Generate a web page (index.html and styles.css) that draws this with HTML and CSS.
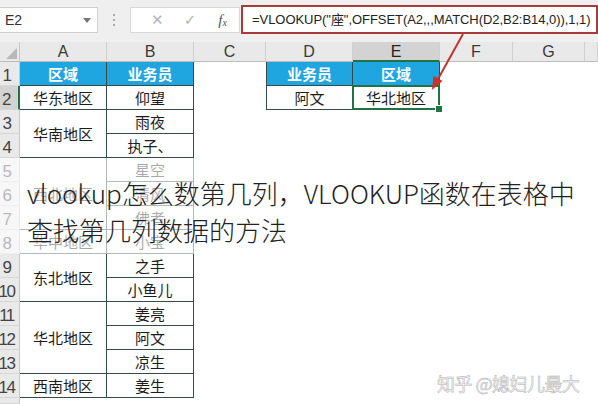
FILE: index.html
```html
<!DOCTYPE html>
<html lang="zh-CN">
<head>
<meta charset="utf-8">
<title>VLOOKUP</title>
<link rel="stylesheet" href="styles.css">
</head>
<body>
<div class="page">
  <div class="toolbar">
    <div class="namebox"><span class="ref">E2</span><span class="caret"></span></div>
    <div class="dots"><i></i><i></i><i></i></div>
    <div class="btns">
      <span class="btn cancel">✕</span>
      <span class="btn ok">✓</span>
      <span class="btn fx">f<sub>x</sub></span>
    </div>
    <div class="formula">=VLOOKUP("座",OFFSET(A2,,,MATCH(D2,B2:B14,0)),1,1)</div>
  </div>

  <div class="sheet">
    <!-- header row -->
    <div class="corner"><span class="tri"></span></div>
    <div class="colh">A</div>
    <div class="colh">B</div>
    <div class="colh">C</div>
    <div class="colh">D</div>
    <div class="colh sel">E</div>
    <div class="colh">F</div>
    <div class="colh">G</div>
    <div class="colh"></div>

    <!-- row 1 -->
    <div class="rowh">1</div>
    <div class="c t th first">区域</div>
    <div class="c t th">业务员</div>
    <div class="c"></div>
    <div class="c t th dl">业务员</div>
    <div class="c t th">区域</div>
    <div class="c"></div><div class="c"></div><div class="c"></div>

    <!-- row 2 -->
    <div class="rowh sel">2</div>
    <div class="c t first">华东地区</div>
    <div class="c t">仰望</div>
    <div class="c"></div>
    <div class="c t dl">阿文</div>
    <div class="c t active">华北地区</div>
    <div class="c"></div><div class="c"></div><div class="c"></div>

    <!-- row 3 -->
    <div class="rowh">3</div>
    <div class="c t first span2">华南地区</div>
    <div class="c t">雨夜</div>
    <div class="c"></div><div class="c"></div><div class="c"></div><div class="c"></div><div class="c"></div><div class="c"></div>

    <!-- row 4 -->
    <div class="rowh">4</div>
    <div class="c t">执子、</div>
    <div class="c"></div><div class="c"></div><div class="c"></div><div class="c"></div><div class="c"></div><div class="c"></div>

    <!-- row 5 -->
    <div class="rowh">5</div>
    <div class="c t first span3">西北地区</div>
    <div class="c t">星空</div>
    <div class="c"></div><div class="c"></div><div class="c"></div><div class="c"></div><div class="c"></div><div class="c"></div>

    <!-- row 6 -->
    <div class="rowh">6</div>
    <div class="c t">清风</div>
    <div class="c"></div><div class="c"></div><div class="c"></div><div class="c"></div><div class="c"></div><div class="c"></div>

    <!-- row 7 -->
    <div class="rowh">7</div>
    <div class="c t">佛者</div>
    <div class="c"></div><div class="c"></div><div class="c"></div><div class="c"></div><div class="c"></div><div class="c"></div>

    <!-- row 8 -->
    <div class="rowh">8</div>
    <div class="c t first">华中地区</div>
    <div class="c t">小宝</div>
    <div class="c"></div><div class="c"></div><div class="c"></div><div class="c"></div><div class="c"></div><div class="c"></div>

    <!-- row 9 -->
    <div class="rowh">9</div>
    <div class="c t first span2">东北地区</div>
    <div class="c t">之手</div>
    <div class="c"></div><div class="c"></div><div class="c"></div><div class="c"></div><div class="c"></div><div class="c"></div>

    <!-- row 10 -->
    <div class="rowh">10</div>
    <div class="c t">小鱼儿</div>
    <div class="c"></div><div class="c"></div><div class="c"></div><div class="c"></div><div class="c"></div><div class="c"></div>

    <!-- row 11 -->
    <div class="rowh">11</div>
    <div class="c t first span3">华北地区</div>
    <div class="c t">姜亮</div>
    <div class="c"></div><div class="c"></div><div class="c"></div><div class="c"></div><div class="c"></div><div class="c"></div>

    <!-- row 12 -->
    <div class="rowh">12</div>
    <div class="c t">阿文</div>
    <div class="c"></div><div class="c"></div><div class="c"></div><div class="c"></div><div class="c"></div><div class="c"></div>

    <!-- row 13 -->
    <div class="rowh">13</div>
    <div class="c t">凉生</div>
    <div class="c"></div><div class="c"></div><div class="c"></div><div class="c"></div><div class="c"></div><div class="c"></div>

    <!-- row 14 -->
    <div class="rowh">14</div>
    <div class="c t first">西南地区</div>
    <div class="c t">姜生</div>
    <div class="c"></div><div class="c"></div><div class="c"></div><div class="c"></div><div class="c"></div><div class="c"></div>

    <!-- row 15 (partial) -->
    <div class="rowh"></div>
  </div>

  <div class="band">
    <p class="title">vlookup怎么数第几列，VLOOKUP函数在表格中<br>查找第几列数据的方法</p>
  </div>

  <svg class="arrow" width="598" height="404" viewBox="0 0 598 404">
    <line x1="463" y1="34" x2="438" y2="79" stroke="#c0352f" stroke-width="2"/>
    <polygon points="432,90 442.5,81 433.5,76" fill="#d0302a"/>
  </svg>

  <div class="watermark">知乎 @媳妇儿最大</div>
</div>
</body>
</html>
```

FILE: styles.css
```css
* { box-sizing: border-box; }

html, body {
  margin: 0;
  padding: 0;
  background: #ffffff;
}

.page {
  position: relative;
  width: 598px;
  height: 404px;
  overflow: hidden;
  font-family: "Liberation Sans", "Noto Sans CJK SC", sans-serif;
}

/* ---------- formula toolbar ---------- */
.toolbar {
  height: 42px;
  background: #efefef;
  display: flex;
  align-items: flex-start;
}

.namebox {
  margin-top: 7px;
  margin-left: -1px;
  width: 99px;
  height: 26px;
  background: #fff;
  border: 1px solid #cfcfcf;
  display: flex;
  align-items: center;
  justify-content: space-between;
  padding: 0 6px 0 5px;
}

.ref {
  font-size: 14px;
  color: #333;
}

.caret {
  width: 0;
  height: 0;
  border-left: 4px solid transparent;
  border-right: 4px solid transparent;
  border-top: 5px solid #777;
}

.dots {
  width: 32px;
  height: 42px;
  display: flex;
  flex-direction: column;
  align-items: center;
  justify-content: center;
  gap: 3px;
  padding-bottom: 2px;
}

.dots i {
  display: block;
  width: 2px;
  height: 2px;
  background: #a8a8a8;
}

.btns {
  margin-top: 7px;
  width: 110px;
  height: 26px;
  background: #fff;
  border: 1px solid #d8d8d8;
  display: flex;
  align-items: center;
  padding-left: 10px;
}

.btn {
  width: 35px;
  text-align: center;
  color: #b4b4b4;
  font-size: 15px;
  font-family: "DejaVu Sans", sans-serif;
}

.btn.fx {
  color: #555;
  font-family: "Liberation Serif", serif;
  font-style: italic;
  font-size: 15px;
}

.btn.fx sub {
  font-size: 10px;
  vertical-align: -1px;
}

.formula {
  margin-top: 5px;
  margin-left: 1px;
  flex: 1;
  height: 29px;
  background: #fff;
  border: 2px solid #a83a3a;
  font-size: 13px;
  letter-spacing: -0.05px;
  color: #222;
  line-height: 25px;
  padding-left: 9px;
  white-space: nowrap;
  overflow: hidden;
  font-family: "Liberation Sans", "Noto Sans CJK SC", sans-serif;
}

/* ---------- sheet grid ---------- */
.sheet {
  display: grid;
  grid-template-columns: 20px 87px 87px 72px 87px 87px 73px 72px 1fr;
  grid-template-rows: 20px repeat(14, 24px) 1fr;
  height: 362px;
}

.corner {
  background: #e9e9e9;
  border-right: 1px solid #c8c8c8;
  border-bottom: 1px solid #bdbdbd;
  position: relative;
}

.tri {
  position: absolute;
  right: 2px;
  bottom: 2px;
  width: 0;
  height: 0;
  border-left: 11px solid transparent;
  border-bottom: 11px solid #b9b9b9;
}

.colh {
  background: #e9e9e9;
  border-right: 1px solid #d0d0d0;
  border-bottom: 1px solid #bdbdbd;
  font-size: 16px;
  color: #3a3a3a;
  text-align: center;
  line-height: 20px;
}

.colh.sel {
  background: #d3d3d3;
  border-bottom: 2px solid #217346;
  color: #222;
}

.rowh {
  background: #e9e9e9;
  border-right: 1px solid #c8c8c8;
  border-bottom: 1px solid #d6d6d6;
  font-size: 17px;
  letter-spacing: -1.5px;
  color: #444;
  display: flex;
  align-items: flex-end;
  justify-content: center;
  padding-right: 6px;
  line-height: 17px;
  padding-bottom: 1px;
}

.rowh.sel {
  background: #d3d3d3;
  border-right: 2px solid #217346;
}

.c {
  background: #fff;
}

.c.t {
  border-right: 1px solid #36494b;
  border-bottom: 1px solid #36494b;
  font-family: "Noto Sans CJK SC", sans-serif;
  font-size: 15px;
  color: #1c1c1c;
  display: flex;
  align-items: center;
  justify-content: center;
}

.c.th {
  background: #1fa5e0;
  color: #fff;
  font-weight: bold;
}

.c.dl {
  border-left: 1px solid #36494b;
}

.span2 { grid-row: span 2; }
.span3 { grid-row: span 3; }

.c.active {
  position: relative;
}

.c.active::after {
  content: "";
  position: absolute;
  left: -1px;
  top: -1px;
  right: -1px;
  bottom: -1px;
  border: 2px solid #217346;
}

.c.active::before {
  content: "";
  position: absolute;
  right: -4px;
  bottom: -4px;
  width: 6px;
  height: 6px;
  background: #217346;
  border: 1px solid #fff;
  z-index: 2;
}

/* ---------- overlay title ---------- */
.band {
  position: absolute;
  left: 0;
  top: 158px;
  width: 598px;
  height: 96px;
  background: rgba(255, 255, 255, 0.62);
}

.title {
  margin: 0;
  padding: 16px 0 0 27px;
  font-family: "Noto Sans CJK SC", sans-serif;
  font-weight: 300;
  font-size: 26px;
  line-height: 37px;
  color: #222;
  white-space: nowrap;
}

.arrow {
  position: absolute;
  left: 0;
  top: 0;
}

.watermark {
  position: absolute;
  left: 437px;
  top: 370px;
  font-family: "Noto Sans CJK SC", sans-serif;
  font-size: 18px;
  color: #f7f7f7;
  -webkit-text-stroke: 0.5px #b0b0b0;
  white-space: nowrap;
  letter-spacing: -0.5px;
}
```
